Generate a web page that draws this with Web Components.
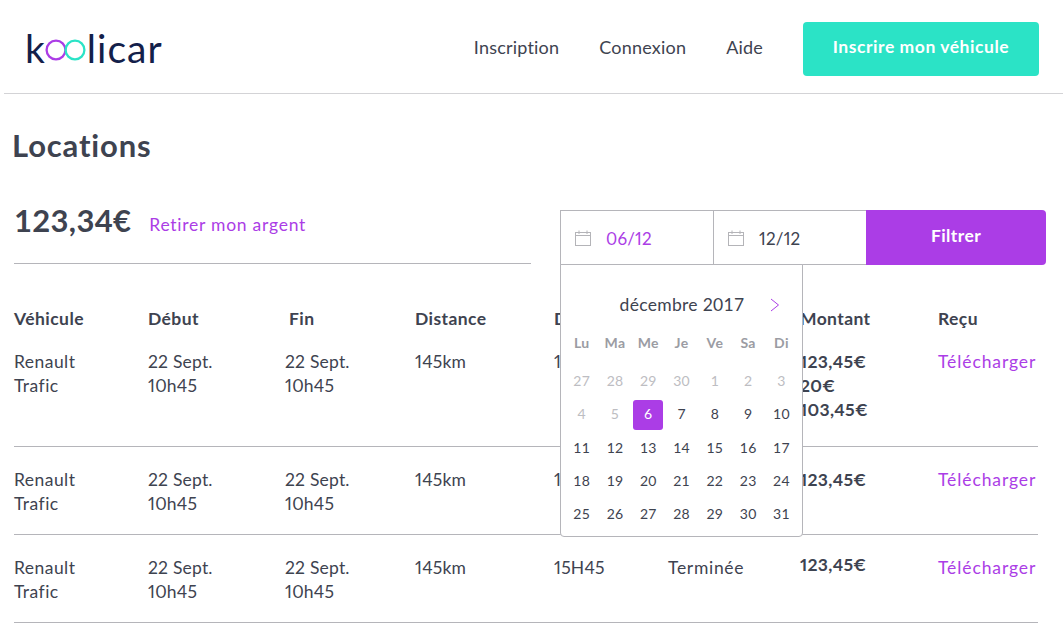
<!doctype html>
<html lang="fr">
<head>
<meta charset="utf-8">
<title>Koolicar - Locations</title>
<style>
  html, body { margin: 0; background: #fff; }
  body { font-family: Lato, "Open Sans", sans-serif; color: #3e4350; }
</style>
</head>
<body>
<app-header>
  <nav-link>Inscription</nav-link>
  <nav-link>Connexion</nav-link>
  <nav-link>Aide</nav-link>
</app-header>

<page-body>
  <span slot="title">Locations</span>
  <balance-box slot="balance" amount="123,34€" action="Retirer mon argent"></balance-box>
  <date-filter slot="filter" from="06/12" to="12/12"></date-filter>
  <rental-table slot="table">
    <!-- the date picker is open over the next columns, only what shows beside it is written -->
    <rental-row head><div class="name">Véhicule</div><div>Début</div><div class="fin">Fin</div><div>Distance</div><div>D</div><div></div><div>Montant</div><div>Reçu</div></rental-row>
    <rental-row first><div class="name">Renault<br>Trafic</div><div>22 Sept.<br>10h45</div><div>22 Sept.<br>10h45</div><div>145km</div><div>1</div><div></div><div class="amount">123,45€<br>20€<br>103,45€</div><div class="link">Télécharger</div></rental-row>
    <rental-row><div class="name">Renault<br>Trafic</div><div>22 Sept.<br>10h45</div><div>22 Sept.<br>10h45</div><div>145km</div><div>1</div><div></div><div class="amount">123,45€</div><div class="link">Télécharger</div></rental-row>
    <rental-row><div class="name">Renault<br>Trafic</div><div>22 Sept.<br>10h45</div><div>22 Sept.<br>10h45</div><div>145km</div><div>15H45</div><div class="status">Terminée</div><div class="amount up">123,45€</div><div class="link">Télécharger</div></rental-row>
  </rental-table>
</page-body>

<script>
// Small helper so every element gets an open shadow root with its markup
class Base extends HTMLElement {
    constructor() {
        super();
        this.attachShadow({ mode: 'open' });
    }
    connectedCallback() {
        this.shadowRoot.innerHTML = this.render();
    }
}

class AppHeader extends Base {
    render() {
        return `
            <style>
                :host { display: flex; align-items: center; height: 90px; margin-left: 4px; padding: 3px 24px 0 21px; border-bottom: 1px solid #d3d3d6; }
                .logo { display: flex; align-items: baseline; color: #13204a; font-size: 39px; line-height: 1; font-weight: 400; }
                .logo svg { display: block; margin-bottom: -2.5px; }
                .logo .rest { letter-spacing: 1px; }
                nav { margin-left: auto; display: flex; align-items: center; gap: 40px; }
                .cta { display: flex; align-items: center; justify-content: center; width: 236px; height: 54px; margin-top: 2px; background: #2be3c6; border-radius: 4px; color: #fff; font-size: 17.5px; font-weight: 700; letter-spacing: .55px; padding-bottom: 5px; box-sizing: border-box; }
            </style>
            <div class="logo"><span>k</span><svg width="42" height="26" viewBox="0 0 42 26"><circle cx="11" cy="13" r="9.4" fill="none" stroke="#ab3de6" stroke-width="2.3"/><circle cx="30" cy="13" r="9.4" fill="none" stroke="#2be3c6" stroke-width="2.3"/></svg><span class="rest">licar</span></div>
            <nav><slot></slot><div class="cta">Inscrire mon véhicule</div></nav>
        `;
    }
}

class NavLink extends Base {
    render() {
        return `
            <style>
                :host { display: block; margin-bottom: 2px; font-size: 18px; letter-spacing: .2px; color: #3e4350; }
            </style>
            <slot></slot>
        `;
    }
}

class PageBody extends Base {
    render() {
        return `
            <style>
                :host { display: block; padding: 33px 17px 0 14px; }
                h1 { margin: 0 0 47px -2px; font-size: 31px; line-height: 36px; font-weight: 700; letter-spacing: .85px; color: #3e4350; }
                .top { display: flex; justify-content: space-between; align-items: flex-start; margin-bottom: 42px; }
            </style>
            <h1><slot name="title"></slot></h1>
            <div class="top"><slot name="balance"></slot><slot name="filter"></slot></div>
            <slot name="table"></slot>
        `;
    }
}

class BalanceBox extends Base {
    render() {
        return `
            <style>
                :host { display: flex; align-items: flex-start; gap: 18px; width: 517px; height: 53px; border-bottom: 1px solid #b5b5ba; }
                b { font-size: 31px; line-height: 20px; font-weight: 700; color: #3e4350; letter-spacing: .3px; }
                a { margin-top: 4px; font-size: 17.5px; line-height: 22px; letter-spacing: .75px; color: #ab3de6; }
            </style>
            <b>${this.getAttribute('amount')}</b><a>${this.getAttribute('action')}</a>
        `;
    }
}

class DateFilter extends Base {
    render() {
        const icon = `<svg width="16" height="16" viewBox="0 0 16 16" fill="none" stroke="#b4b4b8" stroke-width="1"><rect x=".5" y="2.5" width="15" height="13"/><path d="M.5 5.5h15M4 .5v3.5M12 .5v3.5"/></svg>`;
        return `
            <style>
                :host { display: flex; position: relative; width: 486px; height: 55px; }
                .date { display: flex; align-items: center; gap: 15px; width: 153px; box-sizing: border-box; padding: 1px 0 0 14px; border: 1px solid #b5b5ba; border-right: 0; font-size: 17px; letter-spacing: .2px; font-variant-numeric: proportional-nums; color: #3e4350; }
                .from { color: #ab3de6; }
                .go { flex: 1; display: flex; align-items: center; justify-content: center; padding-bottom: 5px; background: #ab3de6; color: #fff; font-size: 17.5px; font-weight: 700; letter-spacing: .4px; border-radius: 0 4px 4px 0; }
                date-picker { position: absolute; left: 0; top: 54px; z-index: 2; }
            </style>
            <div class="date from">${icon}<span>${this.getAttribute('from')}</span></div>
            <div class="date">${icon}<span>${this.getAttribute('to')}</span></div>
            <div class="go">Filtrer</div>
            <date-picker></date-picker>
        `;
    }
}

class DatePicker extends Base {
    render() {
        const days = ['Lu', 'Ma', 'Me', 'Je', 'Ve', 'Sa', 'Di'];
        const prev = [27, 28, 29, 30, 1, 2, 3, 4, 5];
        let cells = prev.map(d => `<span class="off">${d}</span>`).join('');
        for (let d = 6; d <= 31; d++) {
            cells += `<span class="${d === 6 ? 'on' : ''}">${d}</span>`;
        }
        return `
            <style>
                :host { display: block; width: 243px; height: 273px; box-sizing: border-box; background: #fff; border: 1px solid #b5b5ba; border-radius: 0 0 4px 4px; padding: 25px 5px 0 4px; }
                .title { position: relative; height: 32px; padding-left: 2px; text-align: center; font-size: 17.5px; line-height: 30px; letter-spacing: .3px; color: #3e4350; }
                .title svg { position: absolute; left: 205px; top: 8px; }
                .week, .grid { display: grid; grid-template-columns: repeat(7, 33.3px); }
                .week { height: 32px; margin-top: 4px; align-items: center; justify-items: center; font-size: 14px; font-weight: 700; letter-spacing: .3px; color: #9b9ca3; }
                .grid { margin-top: 6px; grid-auto-rows: 33.25px; font-size: 14px; letter-spacing: .2px; color: #3e4350; }
                .grid span { display: flex; align-items: center; justify-content: center; }
                .off { color: #bdbdc2; }
                .grid .on { background: #ab3de6; color: #fff; border-radius: 3px; box-sizing: border-box; height: 30px; width: 30px; margin-top: 2px; padding-bottom: 2px; align-self: center; justify-self: center; }
            </style>
            <div class="title">décembre 2017<svg width="10" height="14" viewBox="0 0 10 14" fill="none" stroke="#ab3de6" stroke-width="1"><path d="M1 1l7.5 6L1 13"/></svg></div>
            <div class="week">${days.map(d => `<span>${d}</span>`).join('')}</div>
            <div class="grid">${cells}</div>
        `;
    }
}

class RentalTable extends Base {
    render() {
        return `
            <style>
                :host { display: block; width: 1024px; font-size: 17.5px; line-height: 24px; letter-spacing: .2px; font-variant-numeric: proportional-nums; color: #3e4350; }
            </style>
            <slot></slot>
        `;
    }
}

class RentalRow extends Base {
    render() {
        return `
            <style>
                :host { display: grid; grid-template-columns: 134px 137px 130px 139px 114px 132px 138px 1fr; padding: 21px 0 18px; border-bottom: 1px solid #b5b5ba; }
                :host([head]) { padding: 0 0 19px; border-bottom: 0; font-weight: 700; letter-spacing: .4px; }
                :host([first]) { padding: 0 0 24px; }
                ::slotted(.name) { letter-spacing: .45px; }
                ::slotted(.fin) { padding-left: 4px; }
                ::slotted(.status) { letter-spacing: .7px; }
                ::slotted(.amount) { font-weight: 700; letter-spacing: .3px; }
                ::slotted(.up) { margin-top: -3px; }
                ::slotted(.link) { color: #ab3de6; letter-spacing: .9px; white-space: nowrap; }
            </style>
            <slot></slot>
        `;
    }
}

customElements.define('app-header', AppHeader);
customElements.define('nav-link', NavLink);
customElements.define('page-body', PageBody);
customElements.define('balance-box', BalanceBox);
customElements.define('date-picker', DatePicker);
customElements.define('date-filter', DateFilter);
customElements.define('rental-table', RentalTable);
customElements.define('rental-row', RentalRow);
</script>
</body>
</html>
